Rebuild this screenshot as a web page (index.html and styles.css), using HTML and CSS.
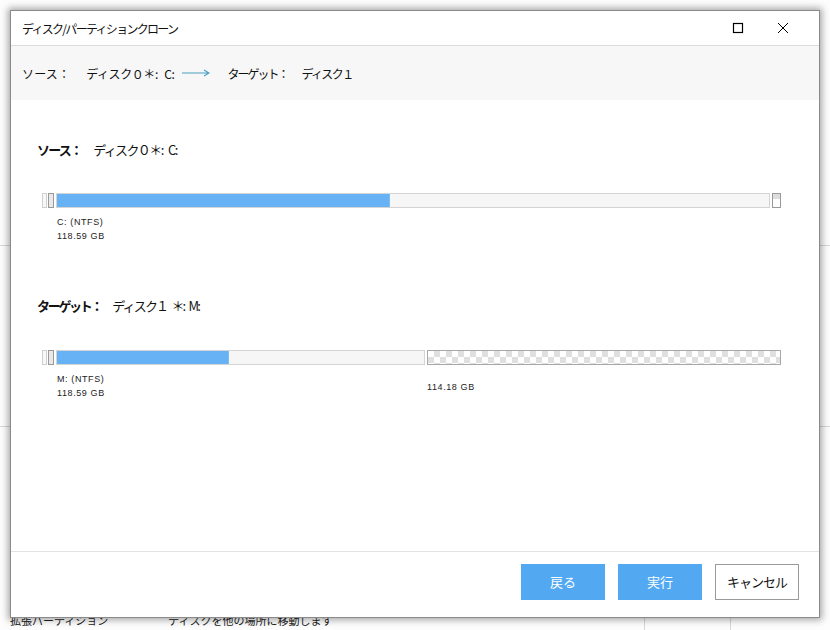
FILE: index.html
```html
<!DOCTYPE html>
<html lang="ja">
<head>
<meta charset="utf-8">
<link rel="stylesheet" href="styles.css">
</head>
<body>
<div class="app">
  <div class="app-row r1"></div>
  <div class="app-row r2"></div>
  <div class="app-bottom"><span>拡張パーティション</span><span class="gap">ディスクを他の場所に移動します</span></div>
  <div class="vline v1"></div>
  <div class="vline v2"></div>
</div>
<div class="dialog">
  <div class="titlebar">
    <span class="title">ディスク/パーティションクローン</span>
    <div class="winbtns">
      <svg class="ico" width="12" height="12" viewBox="0 0 12 12"><rect x="1.5" y="1.5" width="9" height="9" fill="none" stroke="#000" stroke-width="1.2"/></svg>
      <svg class="ico" width="12" height="12" viewBox="0 0 12 12"><path d="M1 1L11 11M11 1L1 11" stroke="#000" stroke-width="1"/></svg>
    </div>
  </div>
  <div class="summary">
    <span class="s-lbl">ソース：</span>
    <span class="s-val">ディスク０＊: C:</span>
    <svg class="arrow" width="28" height="8" viewBox="0 0 28 8"><path d="M0 4H27M22 1L27 4L22 7" fill="none" stroke="#4a9fc4" stroke-width="1.2"/></svg>
    <span class="s-lbl t">ターゲット：</span>
    <span class="s-val v2">ディスク１</span>
  </div>
  <div class="content">
    <div class="section">
      <div class="heading"><b>ソース：</b><span>ディスク０＊: C:</span></div>
      <div class="bar">
        <div class="h h1"></div><div class="h h2"></div>
        <div class="part full"><div class="fill" style="width:46.7%"></div></div>
        <div class="h h3"></div>
      </div>
      <div class="labels">
        <div class="lab"><div>C: (NTFS)</div><div>118.59 GB</div></div>
      </div>
    </div>
    <div class="section tgt">
      <div class="heading"><b>ターゲット：</b><span>ディスク１ ＊: M:</span></div>
      <div class="bar">
        <div class="h h1"></div><div class="h h2"></div>
        <div class="part half"><div class="fill" style="width:172px"></div></div>
        <div class="free"></div>
      </div>
      <div class="labels">
        <div class="lab half"><div>M: (NTFS)</div><div>118.59 GB</div></div>
        <div class="lab freelab"><div>114.18 GB</div></div>
      </div>
    </div>
  </div>
  <div class="footer">
    <button class="btn primary">戻る</button>
    <button class="btn primary">実行</button>
    <button class="btn plain">キャンセル</button>
  </div>
</div>
</body>
</html>
```
FILE: styles.css
```css
html, body { margin: 0; padding: 0; }
body {
  width: 830px; height: 630px; overflow: hidden; position: relative;
  background: #fdfdfd;
  font-family: "Noto Sans CJK JP", "Liberation Sans", sans-serif;
  color: #111;
}
.app { width: 830px; height: 630px; position: relative; }
.app-row { border-bottom: 1px solid #d8d8d8; }
.app-row.r1 { height: 245px; }
.app-row.r2 { height: 180px; }
.app-bottom {
  position: absolute; left: 10px; top: 612px; font-size: 11px; color: #222;
  display: flex;
}
.app-bottom .gap { margin-left: 60px; }
.vline { position: absolute; top: 612px; height: 18px; border-left: 1px solid #d8d8d8; }
.vline.v1 { left: 644px; }
.vline.v2 { left: 730px; }

.dialog {
  position: absolute; left: 10px; top: 10px;
  width: 808px; height: 606px;
  background: #fff;
  border: 1px solid #8a8a8a;
  box-shadow: 0 0 7px 2px rgba(0,0,0,0.35);
  display: flex; flex-direction: column;
}
.titlebar {
  height: 34px; flex: none;
  display: flex; align-items: center; justify-content: space-between;
  padding: 0 0 0 11px;
  border-bottom: 1px solid #dcdcdc;
}
.title { font-size: 12px; letter-spacing: -1.7px; }
.winbtns { display: flex; gap: 33px; margin-right: 30px; }
.ico { display: block; }

.summary {
  height: 54px; flex: none;
  background: #f7f7f7;
  display: flex; align-items: center;
  padding-left: 11px;
  font-size: 12px;
}
.s-lbl { letter-spacing: 0.2px; }
.s-val { margin-left: 16px; letter-spacing: -0.4px; word-spacing: 4px; white-space: pre; }
.s-val.v2 { letter-spacing: -1.6px; margin-left: 14px; }
.arrow { margin: 0 17px 0 8px; }
.s-lbl.t { letter-spacing: -2px; }

.content { flex: 1; padding: 0 38px 0 31px; }
.section { padding-top: 41px; }
.section.tgt { padding-top: 54px; }
.heading { font-size: 13px; margin-left: -5px; display: flex; align-items: center; height: 16px; }
.heading b { font-weight: 700; letter-spacing: -1.8px; }
.heading span { margin-left: 12px; letter-spacing: -1.6px; word-spacing: 4px; white-space: pre; }
.tgt .heading b { letter-spacing: -2.3px; }
.tgt .heading span { margin-left: 11px; letter-spacing: -1.8px; word-spacing: 3px; }

.bar { display: flex; height: 15px; margin-top: 36px; }
.tgt .bar { margin-top: 37px; }
.h { box-sizing: border-box; height: 15px; border: 1px solid #cfcfcf; background: #f8f8f8; }
.h1 { width: 5px; }
.h2 { width: 6px; margin-left: 1px; border-color: #9a9a9a; background: #e8e8e8; }
.h3 { width: 9px; margin-left: 2px; border-color: #9a9a9a; background: linear-gradient(#ddd 0 40%, #fff 40%); }
.part {
  box-sizing: border-box; height: 15px; margin-left: 2px;
  border: 1px solid #d4d4d4; background: #f6f6f6;
}
.part.full { flex: 1; }
.part.half { width: 369px; }
.fill { height: 13px; background: #66b2f4; border-right: 1px solid #7fbdf0; box-sizing: border-box; }
.free {
  flex: 1; margin-left: 2px; box-sizing: border-box; height: 15px;
  border: 1px solid #a8a8a8;
  background-color: #fff;
  background-image:
    linear-gradient(45deg, #e0e0e0 25%, transparent 25%, transparent 75%, #e0e0e0 75%),
    linear-gradient(45deg, #e0e0e0 25%, transparent 25%, transparent 75%, #e0e0e0 75%);
  background-size: 12px 12px;
  background-position: 0 0, 6px 6px;
}

.labels { display: flex; margin-top: 7px; font-size: 9px; line-height: 14px; color: #222; letter-spacing: 0.6px; font-family: "Liberation Sans", "Noto Sans CJK JP", sans-serif; }
.lab { padding-left: 15px; }
.lab.half { width: 355px; }
.freelab { padding-left: 15px; padding-top: 8px; }

.footer {
  height: 66px; flex: none; box-sizing: border-box;
  border-top: 1px solid #e3e3e3;
  display: flex; justify-content: flex-end; align-items: center;
  gap: 13px; padding-right: 20px; padding-bottom: 6px;
}
.btn {
  width: 84px; height: 36px; box-sizing: border-box;
  font-family: "Noto Sans CJK JP", sans-serif; font-size: 13px;
  border: none; cursor: pointer; padding: 0;
}
.btn.primary { background: #52a9f2; color: #fff; }
.btn.plain { background: #fff; border: 1px solid #9a9a9a; color: #111; letter-spacing: -1px; }
```
